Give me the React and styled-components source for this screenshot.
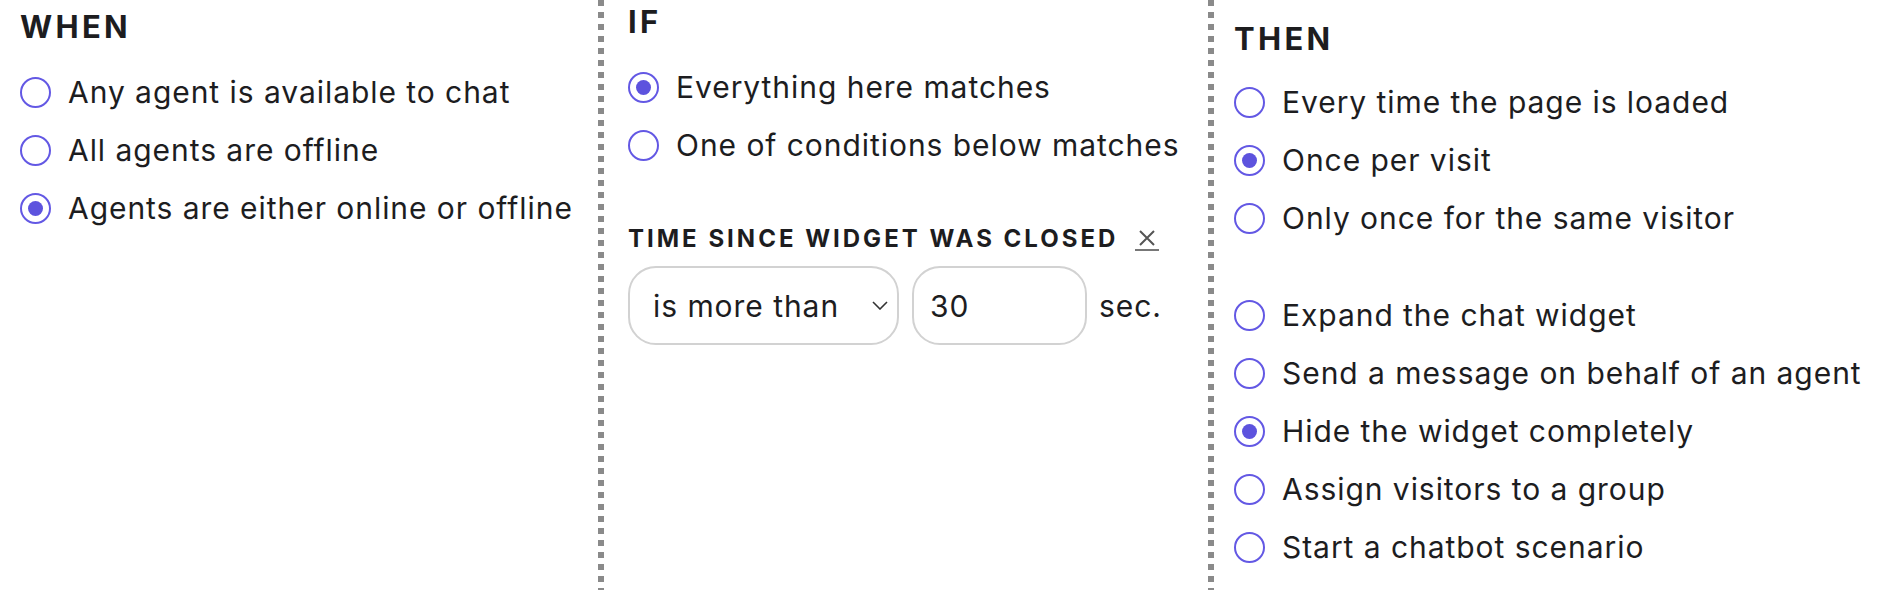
import React from 'react';
import styled, { createGlobalStyle } from 'styled-components';

const GlobalStyle = createGlobalStyle`
  html, body {
    margin: 0;
    padding: 0;
    background: #fff;
  }
  body {
    font-family: Inter, "Noto Sans", sans-serif;
    color: #1d1d1f;
  }
`;

const whenOptions = [
  { label: 'Any agent is available to chat' },
  { label: 'All agents are offline' },
  { label: 'Agents are either online or offline', checked: true },
];

const ifOptions = [
  { label: 'Everything here matches', checked: true },
  { label: 'One of conditions below matches' },
];

const frequencyOptions = [
  { label: 'Every time the page is loaded' },
  { label: 'Once per visit', checked: true },
  { label: 'Only once for the same visitor' },
];

const actionOptions = [
  { label: 'Expand the chat widget' },
  { label: 'Send a message on behalf of an agent' },
  { label: 'Hide the widget completely', checked: true },
  { label: 'Assign visitors to a group' },
  { label: 'Start a chatbot scenario' },
];

function RadioList({ items }) {
  return (
    <List>
      {items.map((o) => (
        <Row key={o.label}>
          <Radio $checked={o.checked} />
          <Label>{o.label}</Label>
        </Row>
      ))}
    </List>
  );
}

export default function App() {
  return (
    <>
      <GlobalStyle />
      <Board>
        <Column $width="598px" $top="11px" $left="20px">
          <Heading>WHEN</Heading>
          <RadioList items={whenOptions} />
        </Column>

        <Column $width="610px" $top="6px" $left="30px" $divider>
          <Heading>IF</Heading>
          <RadioList items={ifOptions} />
          <Condition>
            <ConditionTitle>
              TIME SINCE WIDGET WAS CLOSED
              <RemoveButton aria-label="remove">
                <svg width="18" height="16" viewBox="0 0 18 16">
                  <path d="M2 1 L16 15 M16 1 L2 15" stroke="#555" strokeWidth="2" fill="none" />
                </svg>
              </RemoveButton>
            </ConditionTitle>
            <Controls>
              <SelectBox>
                <span>is more than</span>
                <svg width="16" height="9" viewBox="0 0 16 9">
                  <path d="M1 1 L8 8 L15 1" stroke="#333" strokeWidth="1.6" fill="none" />
                </svg>
              </SelectBox>
              <NumberBox>30</NumberBox>
              <Unit>sec.</Unit>
            </Controls>
          </Condition>
        </Column>

        <Column $top="23px" $left="26px" $headGap="33px" $divider $grow>
          <Heading>THEN</Heading>
          <RadioList items={frequencyOptions} />
          <Spacer />
          <RadioList items={actionOptions} />
        </Column>
      </Board>
    </>
  );
}

const Board = styled.div`
  display: flex;
  width: 1882px;
  height: 590px;
  overflow: hidden;
`;

const Column = styled.section`
  box-sizing: border-box;
  flex: ${(p) => (p.$grow ? '1 1 auto' : `0 0 ${p.$width}`)};
  display: flex;
  flex-direction: column;
  padding-top: ${(p) => p.$top};
  padding-left: ${(p) => p.$left};
  background-image: ${(p) =>
    p.$divider ? 'linear-gradient(#8a8a8a 50%, transparent 50%)' : 'none'};
  background-size: 6px 12px;
  background-repeat: repeat-y;
  background-position: left top;

  h2 {
    margin-bottom: ${(p) => p.$headGap || '35px'};
  }
`;

const Heading = styled.h2`
  margin: 0;
  font-size: 31px;
  line-height: 1;
  font-weight: 700;
  letter-spacing: 3.3px;
  color: #1d1d1f;
`;

const List = styled.div`
  display: flex;
  flex-direction: column;
  gap: 27px;
`;

const Row = styled.label`
  display: flex;
  align-items: center;
  height: 31px;
  gap: 17px;
`;

const Radio = styled.span`
  box-sizing: border-box;
  flex: 0 0 31px;
  width: 31px;
  height: 31px;
  border-radius: 50%;
  border: 2.5px solid #6358e4;
  display: flex;
  align-items: center;
  justify-content: center;

  &::after {
    content: '';
    width: 15px;
    height: 15px;
    border-radius: 50%;
    background: ${(p) => (p.$checked ? '#5d53de' : 'transparent')};
  }
`;

const Label = styled.span`
  font-size: 30px;
  line-height: 31px;
  letter-spacing: 0.95px;
  color: #1d1d1f;
  white-space: nowrap;
`;

const Spacer = styled.div`
  height: 66px;
`;

const Condition = styled.div`
  margin-top: 66px;
  display: flex;
  flex-direction: column;
  gap: 15px;
`;

const ConditionTitle = styled.div`
  display: flex;
  align-items: center;
  font-size: 24px;
  line-height: 24px;
  font-weight: 700;
  letter-spacing: 3px;
  color: #1d1d1f;
  white-space: nowrap;
`;

const RemoveButton = styled.span`
  display: inline-flex;
  margin-left: 17px;
  padding: 2px 3px 3px;
  border-bottom: 2px solid #777;
`;

const Controls = styled.div`
  display: flex;
  align-items: center;
`;

const fieldBase = `
  box-sizing: border-box;
  height: 79px;
  border: 2px solid #d2d2d2;
  border-radius: 28px;
  background: #fff;
  display: flex;
  align-items: center;
  font-size: 30px;
  letter-spacing: 0.95px;
  color: #1d1d1f;
`;

const SelectBox = styled.div`
  ${fieldBase}
  width: 271px;
  padding: 0 9px 0 23px;
  justify-content: space-between;
`;

const NumberBox = styled.div`
  ${fieldBase}
  width: 175px;
  margin-left: 13px;
  padding-left: 16px;
`;

const Unit = styled.span`
  margin-left: 12px;
  font-size: 30px;
  letter-spacing: 0.95px;
  color: #1d1d1f;
`;
